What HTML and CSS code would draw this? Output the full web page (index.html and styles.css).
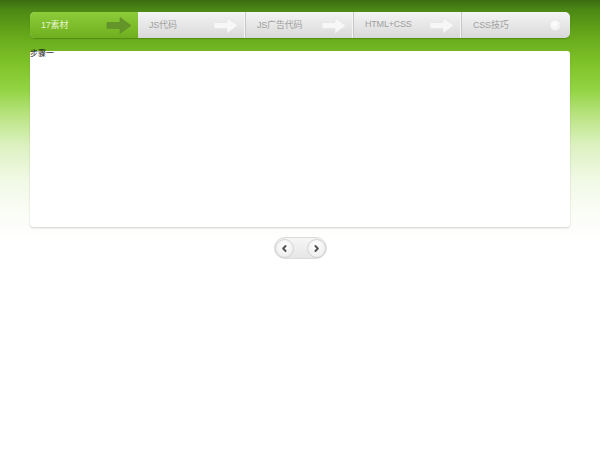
FILE: index.html
```html
<!DOCTYPE html>
<html>
<head>
<meta charset="utf-8">
<link rel="stylesheet" href="styles.css">
</head>
<body>
<div class="page">
  <ul class="steps">
    <li class="step active"><span class="label">17素材</span><svg class="arrow" viewBox="0 0 26 18"><path d="M1 6 H14 V1 L25 9 L14 17 V12 H1 Z"/></svg></li>
    <li class="step"><span class="label">JS代码</span><svg class="arrow" viewBox="0 0 26 18"><path d="M1 6 H14 V1 L25 9 L14 17 V12 H1 Z"/></svg></li>
    <li class="step"><span class="label">JS广告代码</span><svg class="arrow" viewBox="0 0 26 18"><path d="M1 6 H14 V1 L25 9 L14 17 V12 H1 Z"/></svg></li>
    <li class="step"><span class="label">HTML+CSS</span><svg class="arrow" viewBox="0 0 26 18"><path d="M1 6 H14 V1 L25 9 L14 17 V12 H1 Z"/></svg></li>
    <li class="step last"><span class="label">CSS技巧</span><span class="dot"></span></li>
  </ul>
  <div class="panel">
    <div class="panel-text">步骤一</div>
  </div>
  <div class="pager">
    <button class="pbtn"><svg viewBox="0 0 10 10"><path d="M6.2 2.2 L3.5 5 L6.2 7.8"/></svg></button>
    <button class="pbtn"><svg viewBox="0 0 10 10"><path d="M3.8 2.2 L6.5 5 L3.8 7.8"/></svg></button>
  </div>
</div>
</body>
</html>
```
FILE: styles.css
```css
html, body {
  margin: 0;
  padding: 0;
}
body {
  width: 600px;
  height: 469px;
  font-family: "Liberation Sans", "Noto Sans CJK SC", sans-serif;
  background: linear-gradient(to bottom,
    #3d6c12 0px,
    #4c8814 10px,
    #66a81a 35px,
    #80c42a 65px,
    #93d444 90px,
    #b8e380 115px,
    #dcf1c0 145px,
    #f1f9e6 180px,
    #fbfdf7 215px,
    #ffffff 240px,
    #ffffff 100%);
  background-repeat: no-repeat;
}
.page {
  width: 540px;
  margin: 0 auto;
  padding-top: 12px;
  display: flex;
  flex-direction: column;
  align-items: stretch;
}
.steps {
  list-style: none;
  margin: 0;
  padding: 0;
  display: flex;
  height: 26px;
  border-radius: 5px;
  overflow: hidden;
  background: linear-gradient(to bottom, #f4f4f4, #e4e4e4 60%, #d8d8d8);
  box-shadow: 0 1px 1px rgba(40, 80, 10, 0.35);
}
.step {
  width: 108px;
  box-sizing: border-box;
  display: flex;
  align-items: center;
  justify-content: space-between;
  padding: 0 6px 2px 11px;
  border-right: 1px solid #c6c6c6;
  box-shadow: inset -1px 0 0 #f6f6f6;
}
.step.last {
  border-right: none;
  box-shadow: none;
  padding-right: 9px;
}
.label {
  font-size: 9px;
  color: #a0a0a0;
  letter-spacing: -0.2px;
}
.arrow {
  width: 26px;
  height: 19px;
  margin-top: 2px;
}
.arrow path {
  fill: #f7f7f7;
  stroke: #e0e0e0;
  stroke-width: 0.6;
}
.step.active {
  background: linear-gradient(to bottom, #8ccb3a, #7bbb28 60%, #6fae20);
  border-right: none;
  box-shadow: none;
}
.step.active .label {
  color: #e6f4cf;
}
.step.active .arrow path {
  fill: #64952a;
  stroke: #5d8b26;
}
.dot {
  width: 11px;
  height: 11px;
  margin-top: 2px;
  border-radius: 50%;
  background: radial-gradient(circle at 40% 35%, #ffffff, #f0f0f0 60%, #dcdcdc);
  box-shadow: 0 0 1px rgba(0,0,0,0.15);
}
.panel {
  margin-top: 13px;
  height: 176px;
  background: #ffffff;
  border-radius: 3px;
  box-shadow: 0 1px 2px rgba(120, 130, 110, 0.35);
}
.panel-text {
  font-size: 8px;
  color: #111;
  line-height: 8px;
  margin-top: -1px;
}
.pager {
  align-self: center;
  margin-top: 10px;
  width: 53px;
  height: 22px;
  box-sizing: border-box;
  border-radius: 11px;
  border: 1px solid #dadada;
  background: linear-gradient(to bottom, #f6f6f6, #e6e6e6);
  display: flex;
  align-items: center;
  justify-content: space-between;
  padding: 0;
}
.pbtn {
  width: 19px;
  height: 19px;
  padding: 0;
  border-radius: 50%;
  border: 1px solid #d4d4d4;
  background: radial-gradient(circle at 50% 35%, #ffffff, #efefef 70%, #dedede);
  display: flex;
  align-items: center;
  justify-content: center;
}
.pbtn svg {
  width: 9px;
  height: 9px;
}
.pbtn path {
  fill: none;
  stroke: #555;
  stroke-width: 2.2;
  stroke-linecap: round;
  stroke-linejoin: round;
}
```
